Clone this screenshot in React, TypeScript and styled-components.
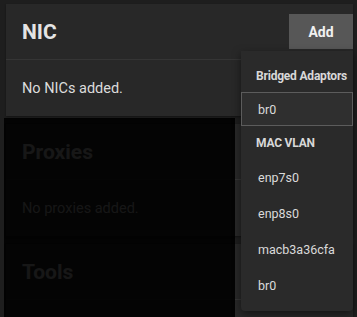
import React from 'react';
import styled, { createGlobalStyle } from 'styled-components';

const GlobalStyle = createGlobalStyle`
  html, body {
    margin: 0;
    padding: 0;
    background: #1e1e1e;
    font-family: Roboto, "Liberation Sans", sans-serif;
    overflow: hidden;
  }
`;

interface Group {
  label: string;
  items: string[];
}

const groups: Group[] = [
  { label: 'Bridged Adaptors', items: ['br0'] },
  { label: 'MAC VLAN', items: ['enp7s0', 'enp8s0', 'macb3a36cfa', 'br0'] },
];

const cards = [
  { title: 'NIC', empty: 'No NICs added.', action: true },
  { title: 'Proxies', empty: 'No proxies added.', action: false },
  { title: 'Tools', empty: '', action: false },
];

const App: React.FC = () => {
  return (
    <>
      <GlobalStyle />
      <Page>
        {cards.map((card) => (
          <Card key={card.title}>
            <CardHeader>
              <Title>{card.title}</Title>
              {card.action && <AddButton>Add</AddButton>}
            </CardHeader>
            <CardBody>{card.empty}</CardBody>
          </Card>
        ))}
        <Backdrop />
        <Menu>
          {groups.map((group, gi) => (
            <MenuGroup key={group.label}>
              <GroupLabel>{group.label}</GroupLabel>
              {group.items.map((item, i) => (
                <MenuItem key={item + i} $selected={gi === 0 && i === 0}>
                  {item}
                </MenuItem>
              ))}
            </MenuGroup>
          ))}
        </Menu>
      </Page>
    </>
  );
};

const Page = styled.div`
  position: relative;
  width: 357px;
  height: 317px;
  overflow: hidden;
  box-sizing: border-box;
  padding: 4px 4px 0 6px;
  display: flex;
  flex-direction: column;
  gap: 8px;
`;

const Card = styled.div`
  background: #282828;
  flex-shrink: 0;
  box-shadow: 0 1px 2px rgba(0, 0, 0, 0.4);
`;

const CardHeader = styled.div`
  height: 56px;
  box-sizing: border-box;
  display: flex;
  align-items: flex-start;
  justify-content: space-between;
  padding: 10px 0 0 16px;
  border-bottom: 1px solid #353535;
`;

const Title = styled.h2`
  margin: 0;
  margin-top: 5px;
  font-size: 21px;
  font-weight: 700;
  color: #e4e4e4;
  line-height: 26px;
`;

const AddButton = styled.button`
  width: 64px;
  height: 35px;
  border: none;
  background: #575757;
  color: #f0f0f0;
  font-family: inherit;
  font-size: 14px;
  font-weight: 700;
  padding: 0;
`;

const CardBody = styled.div`
  height: 56px;
  display: flex;
  align-items: center;
  padding-left: 16px;
  font-size: 14.5px;
  color: #dcdcdc;
`;

const Backdrop = styled.div`
  position: absolute;
  left: 4px;
  top: 118px;
  width: 231px;
  height: 200px;
  background: rgba(0, 0, 0, 0.9);
`;

const Menu = styled.div`
  position: absolute;
  left: 241px;
  top: 51px;
  width: 112px;
  box-sizing: border-box;
  padding: 8px 0;
  background: #2a2a2a;
  border-radius: 0 0 4px 4px;
  box-shadow: 0 3px 8px rgba(0, 0, 0, 0.5);
`;

const MenuGroup = styled.div`
  display: flex;
  flex-direction: column;
`;

const GroupLabel = styled.div`
  height: 33px;
  box-sizing: border-box;
  display: flex;
  align-items: center;
  padding-left: 15px;
  font-size: 12px;
  letter-spacing: -0.2px;
  font-weight: 700;
  color: #d8d8d8;
  white-space: nowrap;
  & + * {
    border-top: 1px solid #383838;
  }
`;

const MenuItem = styled.div<{ $selected: boolean }>`
  height: ${(p) => (p.$selected ? '34px' : '36px')};
  box-sizing: border-box;
  display: flex;
  align-items: center;
  padding-left: 16px;
  font-size: 12.5px;
  color: #dadada;
  border: 1px solid ${(p) => (p.$selected ? '#5c5c5c' : 'transparent')};
  background: ${(p) => (p.$selected ? '#2f2f2f' : 'transparent')};
`;

export default App;
